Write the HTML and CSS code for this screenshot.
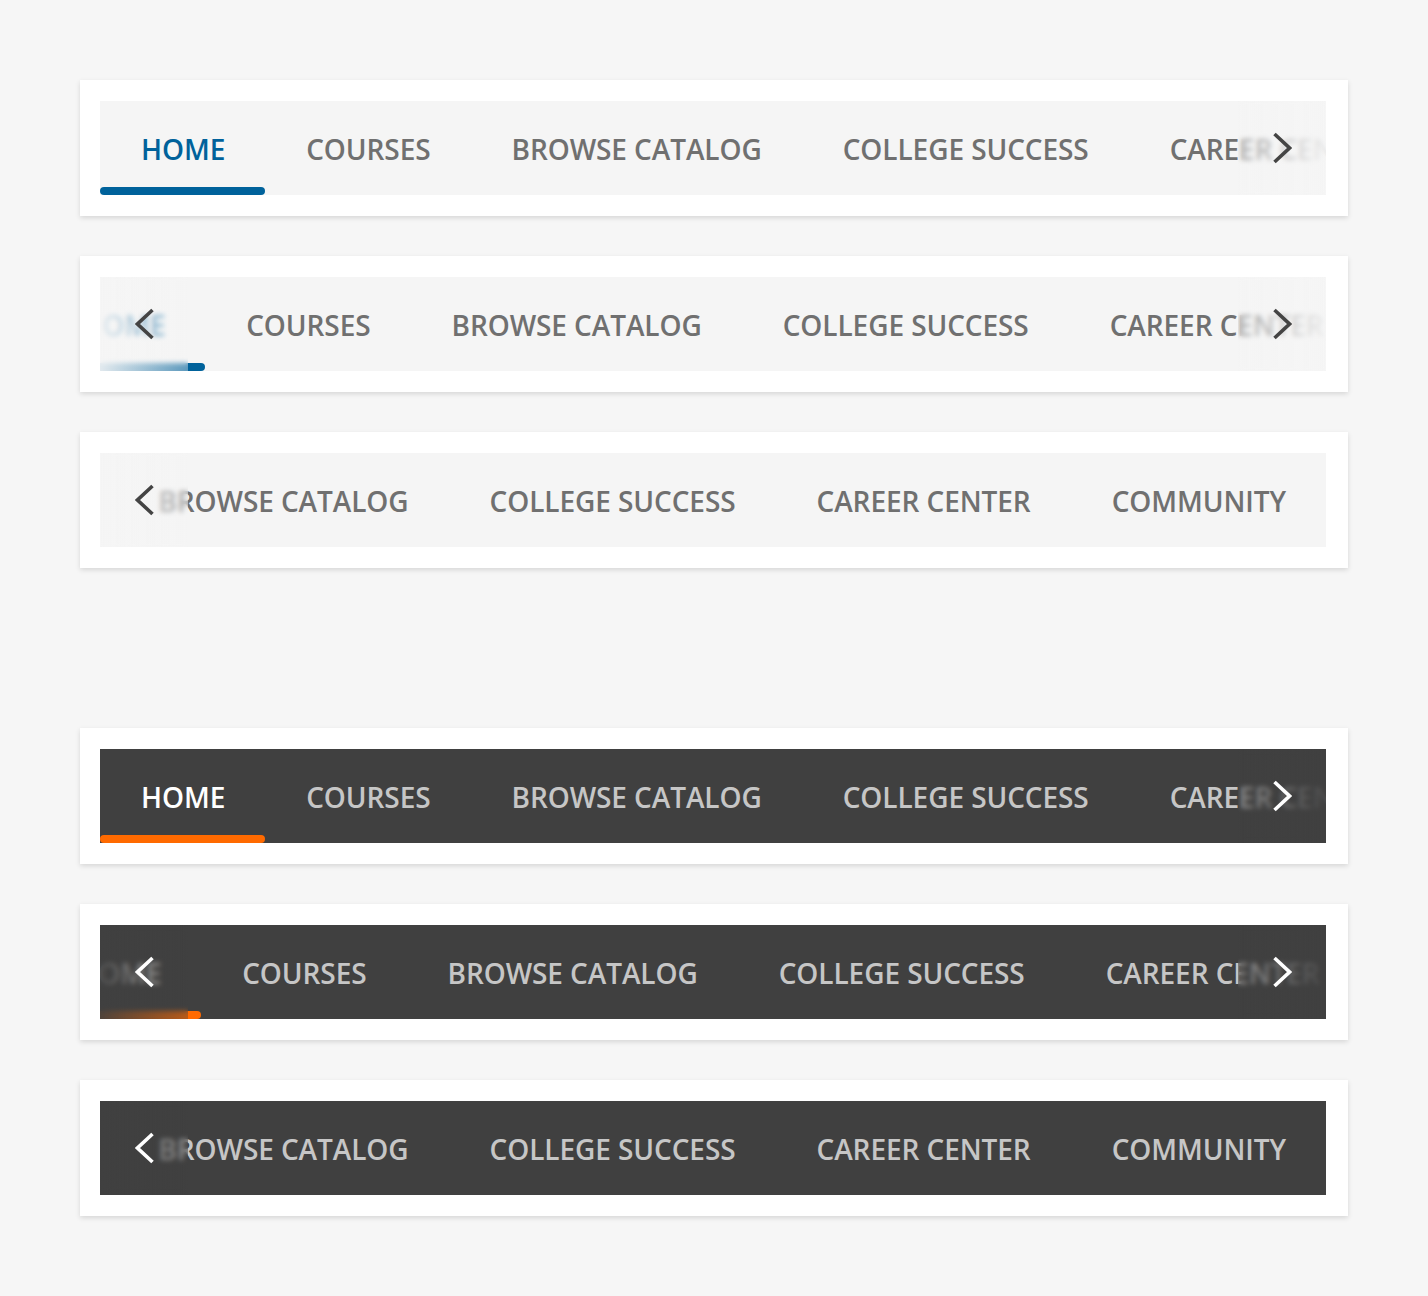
FILE: index.html
```html
<!DOCTYPE html>
<html lang="en">
<head>
<meta charset="utf-8">
<title>Tab bars</title>
<link rel="stylesheet" href="styles.css">
</head>
<body>
<main class="page">
  <section class="group">
    <div class="card">
      <nav class="tabbar">
        <div class="track">
          <a class="tab active">Home</a><a class="tab">Courses</a><a class="tab">Browse Catalog</a><a class="tab">College Success</a><a class="tab">Career Center</a><a class="tab">Community</a>
        </div>
        <div class="fade fade-right"><svg class="chev" viewBox="0 0 20 32"><polyline points="2.5,2 17.5,16 2.5,30"/></svg></div>
      </nav>
    </div>
    <div class="card">
      <nav class="tabbar">
        <div class="track scroll-mid">
          <a class="tab active">Home</a><a class="tab">Courses</a><a class="tab">Browse Catalog</a><a class="tab">College Success</a><a class="tab">Career Center</a><a class="tab">Community</a>
        </div>
        <div class="fade fade-left"><svg class="chev" viewBox="0 0 20 32"><polyline points="17.5,2 2.5,16 17.5,30"/></svg></div>
        <div class="fade fade-right"><svg class="chev" viewBox="0 0 20 32"><polyline points="2.5,2 17.5,16 2.5,30"/></svg></div>
      </nav>
    </div>
    <div class="card">
      <nav class="tabbar end">
        <div class="track">
          <a class="tab active">Home</a><a class="tab">Courses</a><a class="tab">Browse Catalog</a><a class="tab">College Success</a><a class="tab">Career Center</a><a class="tab">Community</a>
        </div>
        <div class="fade fade-left"><svg class="chev" viewBox="0 0 20 32"><polyline points="17.5,2 2.5,16 17.5,30"/></svg></div>
      </nav>
    </div>
  </section>

  <section class="group dark">
    <div class="card">
      <nav class="tabbar">
        <div class="track">
          <a class="tab active">Home</a><a class="tab">Courses</a><a class="tab">Browse Catalog</a><a class="tab">College Success</a><a class="tab">Career Center</a><a class="tab">Community</a>
        </div>
        <div class="fade fade-right"><svg class="chev" viewBox="0 0 20 32"><polyline points="2.5,2 17.5,16 2.5,30"/></svg></div>
      </nav>
    </div>
    <div class="card">
      <nav class="tabbar">
        <div class="track scroll-mid-dark">
          <a class="tab active">Home</a><a class="tab">Courses</a><a class="tab">Browse Catalog</a><a class="tab">College Success</a><a class="tab">Career Center</a><a class="tab">Community</a>
        </div>
        <div class="fade fade-left"><svg class="chev" viewBox="0 0 20 32"><polyline points="17.5,2 2.5,16 17.5,30"/></svg></div>
        <div class="fade fade-right"><svg class="chev" viewBox="0 0 20 32"><polyline points="2.5,2 17.5,16 2.5,30"/></svg></div>
      </nav>
    </div>
    <div class="card">
      <nav class="tabbar end">
        <div class="track">
          <a class="tab active">Home</a><a class="tab">Courses</a><a class="tab">Browse Catalog</a><a class="tab">College Success</a><a class="tab">Career Center</a><a class="tab">Community</a>
        </div>
        <div class="fade fade-left"><svg class="chev" viewBox="0 0 20 32"><polyline points="17.5,2 2.5,16 17.5,30"/></svg></div>
      </nav>
    </div>
  </section>
</main>
</body>
</html>
```

FILE: styles.css
```css
* { box-sizing: border-box; }

html, body {
  margin: 0;
  padding: 0;
  background: #f6f6f6;
}

body {
  font-family: "Open Sans", "Noto Sans", sans-serif;
}

.page {
  padding: 80px;
  display: flex;
  flex-direction: column;
  gap: 160px;
}

.group {
  display: flex;
  flex-direction: column;
  gap: 40px;
}

.card {
  background: #ffffff;
  padding: 21px 22px 21px 20px;
  box-shadow: 0 2px 5px rgba(0, 0, 0, 0.13);
}

.tabbar {
  position: relative;
  height: 94px;
  background: #f5f5f5;
  overflow: hidden;
  display: flex;
}

.tabbar.end {
  justify-content: flex-end;
}

.track {
  display: flex;
  flex: none;
  height: 94px;
}

.scroll-mid { transform: translateX(-60px); }
.scroll-mid-dark { transform: translateX(-64px); }

.tab {
  position: relative;
  flex: none;
  display: block;
  padding: 0 40px 0 41px;
  line-height: 97px;
  font-size: 28px;
  font-weight: 600;
  letter-spacing: -0.08px;
  text-transform: uppercase;
  color: #707070;
  white-space: nowrap;
  text-decoration: none;
}

.tab.active {
  color: #00629b;
}

.tab.active::after {
  content: "";
  position: absolute;
  left: 0;
  right: 0;
  bottom: 0;
  height: 8px;
  border-radius: 4px;
  background: #00629b;
}

.fade {
  position: absolute;
  top: 0;
  bottom: 0;
  width: 88px;
  display: flex;
  align-items: center;
  -webkit-backdrop-filter: blur(2.5px);
  backdrop-filter: blur(2.5px);
}

.fade-right {
  right: 0;
  padding-left: 34px;
  background: linear-gradient(to right, rgba(245, 245, 245, 0.4) 0%, rgba(245, 245, 245, 0.92) 100%);
}

.fade-left {
  left: 0;
  padding-left: 35px;
  background: linear-gradient(to left, rgba(245, 245, 245, 0.38) 0%, rgba(245, 245, 245, 0.92) 100%);
}

.chev {
  width: 20px;
  height: 32px;
  fill: none;
  stroke: #444444;
  stroke-width: 3.6;
  stroke-linecap: butt;
  stroke-linejoin: miter;
}

/* dark variant */
.dark .tabbar {
  background: #404040;
}

.dark .tab {
  color: #c6c6c6;
}

.dark .tab.active {
  color: #ffffff;
}

.dark .tab.active::after {
  background: #ff6a00;
}

.dark .fade-right {
  background: linear-gradient(to right, rgba(64, 64, 64, 0.4) 0%, rgba(64, 64, 64, 0.92) 100%);
}

.dark .fade-left {
  background: linear-gradient(to left, rgba(64, 64, 64, 0.38) 0%, rgba(64, 64, 64, 0.92) 100%);
}

.dark .chev {
  stroke: #ffffff;
}
```
